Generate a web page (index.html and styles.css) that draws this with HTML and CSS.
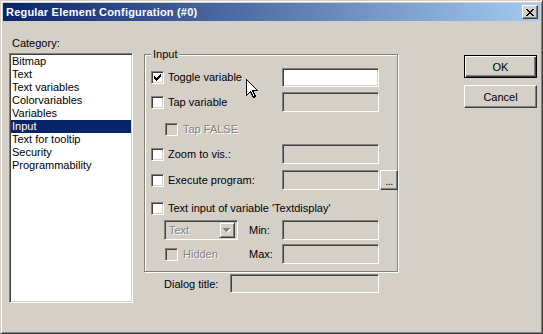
FILE: index.html
```html
<!DOCTYPE html>
<html>
<head>
<meta charset="utf-8">
<title>Regular Element Configuration</title>
<link rel="stylesheet" href="styles.css">
</head>
<body>
<div class="window">
  <div class="titlebar">
    <span class="title">Regular Element Configuration (#0)</span>
    <span class="close"><svg width="8" height="7" viewBox="0 0 8 7" shape-rendering="crispEdges"><path d="M0 0h2v1H0z M6 0h2v1H6z M1 1h2v1H1z M5 1h2v1H5z M2 2h4v1H2z M3 3h2v1H3z M2 4h4v1H2z M1 5h2v1H1z M5 5h2v1H5z M0 6h2v1H0z M6 6h2v1H6z" fill="#000"/></svg></span>
  </div>
  <div class="main">
    <div class="left">
      <div class="cat-label">Category:</div>
      <ul class="list">
        <li>Bitmap</li>
        <li>Text</li>
        <li>Text variables</li>
        <li>Colorvariables</li>
        <li>Variables</li>
        <li class="sel">Input</li>
        <li>Text for tooltip</li>
        <li>Security</li>
        <li>Programmability</li>
      </ul>
    </div>
    <div class="middle">
      <fieldset class="group">
        <legend>Input</legend>
        <div class="rows">
          <div class="row">
            <span class="opt"><span class="cb"><svg width="7" height="7" viewBox="0 0 7 7" shape-rendering="crispEdges"><path d="M6 0h1v1H6z M5 1h2v1H5z M0 2h1v1H0z M4 2h3v1H4z M0 3h2v1H0z M3 3h3v1H3z M0 4h5v1H0z M1 5h3v1H1z M2 6h1v1H2z" fill="#000"/></svg></span>Toggle variable</span>
            <span class="field on"></span>
          </div>
          <div class="row">
            <span class="opt"><span class="cb"></span>Tap variable</span>
            <span class="field"></span>
          </div>
          <div class="row">
            <span class="opt ind"><span class="cb off"></span><span class="dis">Tap FALSE</span></span>
          </div>
          <div class="row">
            <span class="opt"><span class="cb"></span>Zoom to vis.:</span>
            <span class="field"></span>
          </div>
          <div class="row">
            <span class="opt"><span class="cb"></span>Execute program:</span>
            <span class="field"></span>
            <span class="dots">...</span>
          </div>
          <div class="row">
            <span class="opt wide"><span class="cb"></span>Text input of variable 'Textdisplay'</span>
          </div>
          <div class="row">
            <span class="combo"><span class="dis combo-text">Text</span><span class="arrow"><svg width="8" height="5" viewBox="0 0 8 5" shape-rendering="crispEdges"><path d="M1 1h7v1H1z M2 2h5v1H2z M3 3h3v1H3z M4 4h1v1H4z" fill="#fff"/><path d="M0 0h7v1H0z M1 1h5v1H1z M2 2h3v1H2z M3 3h1v1H3z" fill="#808080"/></svg></span></span>
            <span class="mlabel gap">Min:</span>
            <span class="field"></span>
          </div>
          <div class="row">
            <span class="opt ind short"><span class="cb off"></span><span class="dis">Hidden</span></span>
            <span class="mlabel">Max:</span>
            <span class="field"></span>
          </div>
        </div>
      </fieldset>
      <div class="dlg">
        <span class="dlg-label">Dialog title:</span>
        <span class="field dlg-field"></span>
      </div>
    </div>
    <div class="right">
      <button class="btn default">OK</button>
      <button class="btn">Cancel</button>
    </div>
  </div>
  <svg class="cursor" width="12" height="20" viewBox="0 0 12 20" shape-rendering="crispEdges"><path d="M0.5 0.5 L0.5 16.5 L4.5 12.5 L7.5 18.5 L9.5 17.5 L6.5 11.5 L11.5 11.5 Z" fill="#fff" stroke="#000" stroke-width="1"/></svg>
</div>
</body>
</html>
```

FILE: styles.css
```css
* { box-sizing: border-box; }
html, body { margin: 0; padding: 0; }
body {
  width: 543px;
  height: 334px;
  overflow: hidden;
  background: #D4D0C8;
  font-family: "Liberation Sans", Arial, sans-serif;
  font-size: 11px;
  color: #000;
}
.window {
  position: relative;
  width: 543px;
  height: 334px;
  background: #D4D0C8;
  border: 1px solid;
  border-color: #D4D0C8 #404040 #404040 #D4D0C8;
  box-shadow: inset 1px 1px #fff, inset -1px -1px #808080;
  padding: 2px;
}
.titlebar {
  height: 18px;
  display: flex;
  align-items: center;
  justify-content: space-between;
  background: linear-gradient(to right, #0A246A, #A6CAF0);
  padding: 0 2px 0 3px;
}
.title {
  color: #fff;
  font-weight: bold;
  font-size: 11px;
  letter-spacing: 0.2px;
  line-height: 13px;
}
.close {
  width: 16px;
  height: 14px;
  display: flex;
  align-items: center;
  justify-content: center;
  background: #D4D0C8;
  border: 1px solid;
  border-color: #fff #404040 #404040 #fff;
  box-shadow: inset -1px -1px #808080;
}
.close svg { display: block; }
.main {
  display: flex;
  align-items: flex-start;
  padding-left: 6px;
}
.left { width: 124px; margin-top: 16px; }
.cat-label { line-height: 13px; height: 13px; padding-left: 3px; }
.list {
  list-style: none;
  margin: 3px 0 0;
  width: 124px;
  height: 250px;
  background: #fff;
  border: 1px solid;
  border-color: #808080 #fff #fff #808080;
  box-shadow: inset 1px 1px #404040, inset -1px -1px #D4D0C8;
  padding: 1px;
}
.list li { height: 13px; line-height: 13px; padding-left: 1px; white-space: nowrap; }
.list li.sel { background: #0A246A; color: #fff; }

.middle { width: 254px; margin-left: 11px; margin-top: 27px; }
.group {
  margin: 0;
  width: 254px;
  min-width: 0;
  padding: 6px 0 7px 6px;
  border: 1px solid #808080;
  box-shadow: inset 1px 1px #fff, 1px 1px #fff;
}
.group legend {
  padding: 0 2px;
  line-height: 13px;
  font-size: 11px;
  background: #D4D0C8;
}
.rows {
  display: grid;
  grid-template-rows: 25px 27px 25px 26px 28px 22px 24px 20px;
}
.row { display: flex; align-items: center; height: 20px; }
.opt { display: flex; align-items: center; width: 131px; flex: none; white-space: nowrap; }
.opt.wide { width: 240px; }
.opt.ind { padding-left: 14px; }
.opt.short { width: 98px; }
.cb {
  width: 13px;
  height: 13px;
  flex: none;
  margin-right: 4px;
  background: #fff;
  border: 1px solid;
  border-color: #808080 #fff #fff #808080;
  box-shadow: inset 1px 1px #404040, inset -1px -1px #D4D0C8;
  padding: 2px;
}
.ind .cb { margin-right: 5px; }
.cb svg { display: block; }
.cb.off { background: #D4D0C8; }
.dis { color: #808080; text-shadow: 1px 1px #fff; }
.field {
  width: 97px;
  height: 20px;
  flex: none;
  background: #D4D0C8;
  border: 1px solid;
  border-color: #808080 #fff #fff #808080;
  box-shadow: inset 1px 1px #404040, inset -1px -1px #D4D0C8;
}
.field.on { background: #fff; height: 19px; }
.dots {
  width: 18px;
  height: 20px;
  margin-left: 1px;
  flex: none;
  display: flex;
  align-items: center;
  justify-content: center;
  background: #D4D0C8;
  border: 1px solid;
  border-color: #fff #404040 #404040 #fff;
  box-shadow: inset -1px -1px #808080;
  line-height: 13px;
  padding-top: 2px;
  letter-spacing: -0.5px;
}
.combo {
  margin-left: 13px;
  width: 74px;
  height: 20px;
  flex: none;
  display: flex;
  align-items: center;
  justify-content: space-between;
  background: #D4D0C8;
  border: 1px solid;
  border-color: #808080 #fff #fff #808080;
  box-shadow: inset 1px 1px #404040, inset -1px -1px #D4D0C8;
  padding: 2px;
}
.combo-text { padding-left: 2px; }
.arrow {
  width: 16px;
  height: 16px;
  display: flex;
  align-items: center;
  justify-content: center;
  border: 1px solid;
  border-color: #D4D0C8 #404040 #404040 #D4D0C8;
  box-shadow: inset 1px 1px #fff, inset -1px -1px #808080;
}
.arrow svg { display: block; }
.mlabel { width: 33px; flex: none; }
.mlabel.gap { margin-left: 11px; }

.dlg { display: flex; align-items: center; margin-top: 2px; padding-left: 20px; }
.dlg-label { width: 66px; flex: none; }
.field.dlg-field { width: 149px; height: 19px; }

.right {
  width: 73px;
  margin-left: 66px;
  margin-top: 34px;
  display: flex;
  flex-direction: column;
  gap: 7px;
}
.btn {
  width: 73px;
  height: 23px;
  margin: 0;
  padding: 0;
  font-family: "Liberation Sans", Arial, sans-serif;
  font-size: 11px;
  color: #000;
  background: #D4D0C8;
  border: 1px solid;
  border-color: #fff #404040 #404040 #fff;
  box-shadow: inset -1px -1px #808080;
}
.btn.default {
  border-color: #000;
  box-shadow: inset 1px 1px #fff, inset -1px -1px #404040, inset -2px -2px #808080;
}
.cursor { position: absolute; left: 245px; top: 78px; }
```
